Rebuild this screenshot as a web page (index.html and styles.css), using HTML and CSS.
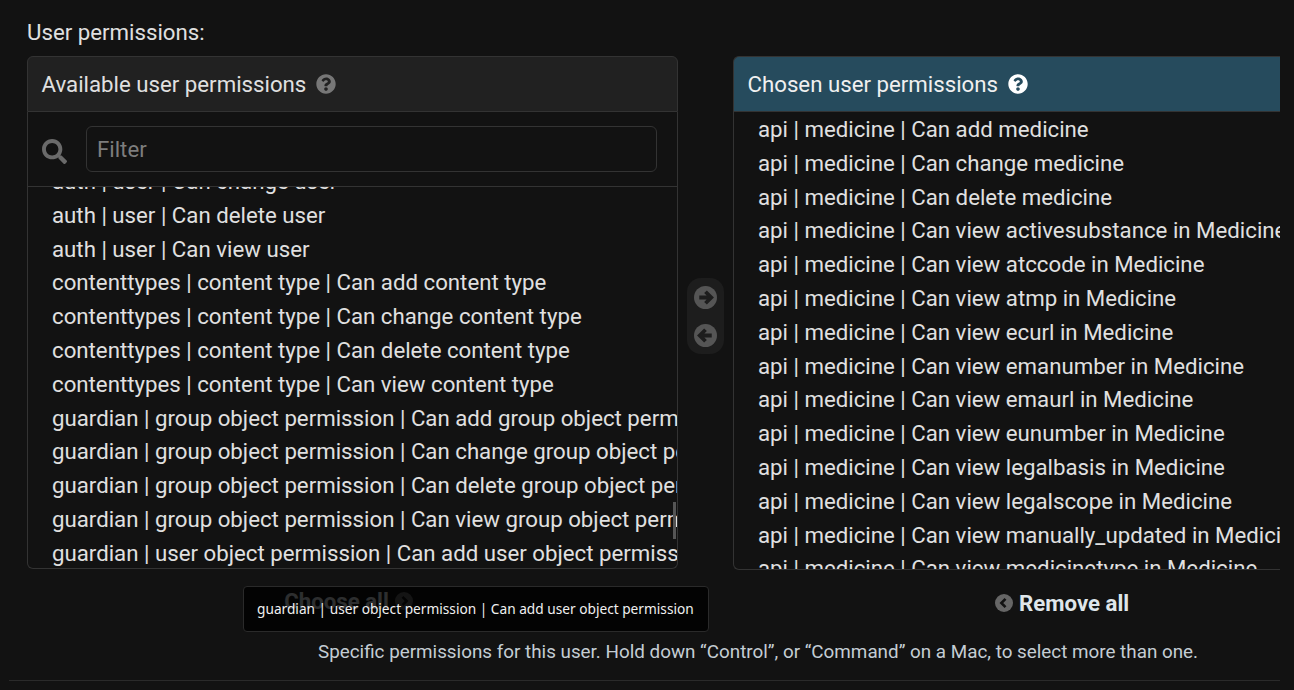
FILE: index.html
```html
<!DOCTYPE html>
<html lang="en">
<head>
  <meta charset="UTF-8">
  <title>User permissions</title>
  <link rel="stylesheet" href="styles.css">
</head>
<body>
  <div class="field">
    <label class="field-label">User permissions:</label>

    <div class="selector">
      <div class="box">
        <div class="box-title">
          Available user permissions
          <svg class="help" viewBox="0 0 512 512"><path d="M504 256c0 136.997-111.043 248-248 248S8 392.997 8 256C8 119.083 119.043 8 256 8s248 111.083 248 248zM262.655 90c-54.497 0-89.255 22.957-116.549 63.758-3.536 5.286-2.353 12.415 2.715 16.258l34.699 26.31c5.205 3.947 12.621 3.008 16.665-2.122 17.864-22.658 30.113-35.797 57.303-35.797 20.429 0 45.698 13.148 45.698 32.958 0 14.976-12.363 22.667-32.534 33.976C247.128 238.528 216 254.941 216 296v4c0 6.627 5.373 12 12 12h56c6.627 0 12-5.373 12-12v-1.333c0-28.462 83.186-29.647 83.186-106.667 0-58.002-60.165-102-116.531-102zM256 338c-25.365 0-46 20.635-46 46 0 25.364 20.635 46 46 46s46-20.636 46-46c0-25.365-20.635-46-46-46z"/></svg>
        </div>
        <div class="filter">
          <svg class="search" viewBox="0 0 512 512"><path d="M505 442.7L405.3 343c-4.5-4.5-10.6-7-17-7H372c27.6-35.3 44-79.7 44-128C416 93.1 322.9 0 208 0S0 93.1 0 208s93.1 208 208 208c48.3 0 92.7-16.4 128-44v16.3c0 6.4 2.5 12.5 7 17l99.7 99.7c9.4 9.4 24.6 9.4 33.9 0l28.3-28.3c9.4-9.4 9.4-24.6.1-34zM208 336c-70.7 0-128-57.2-128-128 0-70.7 57.2-128 128-128 70.7 0 128 57.2 128 128 0 70.7-57.2 128-128 128z"/></svg>
          <input class="filter-input" type="text" placeholder="Filter">
        </div>
        <div class="options options-left">
          <ul class="option-list scrolled">
            <li>auth | user | Can change user</li>
            <li>auth | user | Can delete user</li>
            <li>auth | user | Can view user</li>
            <li>contenttypes | content type | Can add content type</li>
            <li>contenttypes | content type | Can change content type</li>
            <li>contenttypes | content type | Can delete content type</li>
            <li>contenttypes | content type | Can view content type</li>
            <li>guardian | group object permission | Can add group object permission</li>
            <li>guardian | group object permission | Can change group object permission</li>
            <li>guardian | group object permission | Can delete group object permission</li>
            <li>guardian | group object permission | Can view group object permission</li>
            <li>guardian | user object permission | Can add user object permission</li>
          </ul>
          <div class="scroll-thumb"></div>
        </div>
        <div class="box-action choose">
          <a class="action">Choose all
            <svg class="action-icon" viewBox="0 0 24 24"><circle cx="12" cy="12" r="12"/><path class="chevron" d="M10 6.5l5.5 5.5-5.5 5.5"/></svg>
          </a>
        </div>
      </div>

      <div class="movers">
        <svg class="mover" viewBox="0 0 24 24"><circle cx="12" cy="12" r="12"/><path class="arrow" d="M5.5 12h12M12 6l6 6-6 6"/></svg>
        <svg class="mover" viewBox="0 0 24 24"><circle cx="12" cy="12" r="12"/><path class="arrow" d="M18.5 12h-12M12 6l-6 6 6 6"/></svg>
      </div>

      <div class="box">
        <div class="box-title chosen">
          Chosen user permissions
          <svg class="help help-on" viewBox="0 0 512 512"><path d="M504 256c0 136.997-111.043 248-248 248S8 392.997 8 256C8 119.083 119.043 8 256 8s248 111.083 248 248zM262.655 90c-54.497 0-89.255 22.957-116.549 63.758-3.536 5.286-2.353 12.415 2.715 16.258l34.699 26.31c5.205 3.947 12.621 3.008 16.665-2.122 17.864-22.658 30.113-35.797 57.303-35.797 20.429 0 45.698 13.148 45.698 32.958 0 14.976-12.363 22.667-32.534 33.976C247.128 238.528 216 254.941 216 296v4c0 6.627 5.373 12 12 12h56c6.627 0 12-5.373 12-12v-1.333c0-28.462 83.186-29.647 83.186-106.667 0-58.002-60.165-102-116.531-102zM256 338c-25.365 0-46 20.635-46 46 0 25.364 20.635 46 46 46s46-20.636 46-46c0-25.365-20.635-46-46-46z"/></svg>
        </div>
        <div class="options options-right">
          <ul class="option-list">
            <li>api | medicine | Can add medicine</li>
            <li>api | medicine | Can change medicine</li>
            <li>api | medicine | Can delete medicine</li>
            <li>api | medicine | Can view activesubstance in Medicine</li>
            <li>api | medicine | Can view atccode in Medicine</li>
            <li>api | medicine | Can view atmp in Medicine</li>
            <li>api | medicine | Can view ecurl in Medicine</li>
            <li>api | medicine | Can view emanumber in Medicine</li>
            <li>api | medicine | Can view emaurl in Medicine</li>
            <li>api | medicine | Can view eunumber in Medicine</li>
            <li>api | medicine | Can view legalbasis in Medicine</li>
            <li>api | medicine | Can view legalscope in Medicine</li>
            <li>api | medicine | Can view manually_updated in Medicine</li>
            <li>api | medicine | Can view medicinetype in Medicine</li>
          </ul>
        </div>
        <div class="box-action remove">
          <a class="action">
            <svg class="action-icon" viewBox="0 0 24 24"><circle cx="12" cy="12" r="12"/><path class="chevron" d="M14 6.5L8.5 12l5.5 5.5"/></svg>
            Remove all
          </a>
        </div>
      </div>
    </div>

    <p class="help-text">Specific permissions for this user. Hold down “Control”, or “Command” on a Mac, to select more than one.</p>
  </div>

  <div class="tooltip">guardian | user object permission | Can add user object permission</div>
</body>
</html>
```

FILE: styles.css
```css
html, body {
  height: 100%;
}
body {
  margin: 0;
  padding: 0 14px 0 0;
  overflow: hidden;
  background-color: #121212;
  color: #e0e0e0;
  font-family: Roboto, "Liberation Sans", sans-serif;
  font-size: 22.24px;
}
.field {
  padding: 19px 0 14px 18px;
  margin-left: 9px;
  border-bottom: 1px solid #2a2a2a;
}
.field-label {
  display: block;
  line-height: 27px;
  margin-bottom: 10px;
}
.selector {
  display: grid;
  grid-template-columns: 651px 1fr 547px;
}
.box {
  display: flex;
  flex-direction: column;
  min-width: 0;
}
.box-title {
  display: flex;
  align-items: center;
  gap: 10px;
  height: 56px;
  flex: none;
  box-sizing: border-box;
  padding: 0 14px 0 13.5px;
  background-color: #212121;
  border: 1px solid #333;
  border-radius: 6px 6px 0 0;
}
.box-title.chosen {
  background-color: #264b5d;
  border-right: none;
  border-radius: 6px 0 0 0;
  color: #f0f0f0;
}
.help {
  width: 20px;
  height: 20px;
  fill: #777;
}
.help-on {
  fill: #fff;
}
.filter {
  display: flex;
  align-items: center;
  gap: 19px;
  height: 75px;
  flex: none;
  box-sizing: border-box;
  padding: 0 20px 0 14px;
  border: 1px solid #333;
  border-top: none;
}
.search {
  width: 25px;
  height: 25px;
  margin-top: 4px;
  fill: #6a6a6a;
}
.filter-input {
  flex: 1;
  height: 46px;
  box-sizing: border-box;
  padding: 0 10px;
  background-color: #121212;
  border: 1px solid #333;
  border-radius: 6px;
  color: #e0e0e0;
  font-family: inherit;
  font-size: 22.24px;
}
.filter-input::placeholder {
  color: #7d7d7d;
}
.options {
  position: relative;
  height: 382px;
  overflow: hidden;
  flex: none;
  box-sizing: border-box;
  border: 1px solid #333;
  border-top: none;
  border-radius: 0 0 6px 6px;
}
.options-right {
  height: 458px;
  border-right: none;
  border-radius: 0 0 0 6px;
}
.option-list {
  list-style: none;
  margin: 0;
  padding: 1px 0 0 24px;
  white-space: nowrap;
}
.option-list li {
  height: 33.8px;
  line-height: 33.8px;
}
.scrolled {
  margin-top: -23px;
}
.scroll-thumb {
  position: absolute;
  top: 315px;
  right: 1px;
  width: 3px;
  height: 37px;
  background-color: #555;
}
.box-action {
  display: flex;
  align-items: center;
  flex: none;
}
.choose {
  justify-content: center;
  height: 64px;
  padding-right: 8px;
}
.remove {
  height: 66px;
  padding-left: 262px;
}
.action {
  display: flex;
  align-items: center;
  gap: 6px;
  font-size: 22.24px;
  font-weight: 700;
  color: #dfe6ea;
}
.action-icon {
  width: 18px;
  height: 18px;
  fill: #666;
}
.chevron {
  fill: none;
  stroke: #121212;
  stroke-width: 3.5;
}
.movers {
  display: flex;
  flex-direction: column;
  align-items: center;
  justify-content: center;
  align-self: start;
  gap: 15px;
  width: 37px;
  height: 76px;
  margin: 222px auto 0;
  background-color: #1d1d1d;
  border-radius: 14px;
}
.mover {
  width: 23px;
  height: 23px;
  fill: #555;
}
.arrow {
  fill: none;
  stroke: #1d1d1d;
  stroke-width: 4;
}
.help-text {
  margin: 0;
  padding: 2px 0 0 291px;
  font-size: 18.84px;
  line-height: 28px;
  color: #c4cdd4;
}
.tooltip {
  position: absolute;
  left: 243px;
  top: 586px;
  box-sizing: border-box;
  width: 466px;
  height: 46px;
  padding: 0 13px;
  background-color: rgba(0, 0, 0, 0.8);
  border: 1px solid #2a2a2a;
  border-radius: 4px;
  color: #f0f0f0;
  font-family: "Noto Sans", "Open Sans", sans-serif;
  font-size: 13.7px;
  line-height: 44px;
  white-space: nowrap;
}
```
